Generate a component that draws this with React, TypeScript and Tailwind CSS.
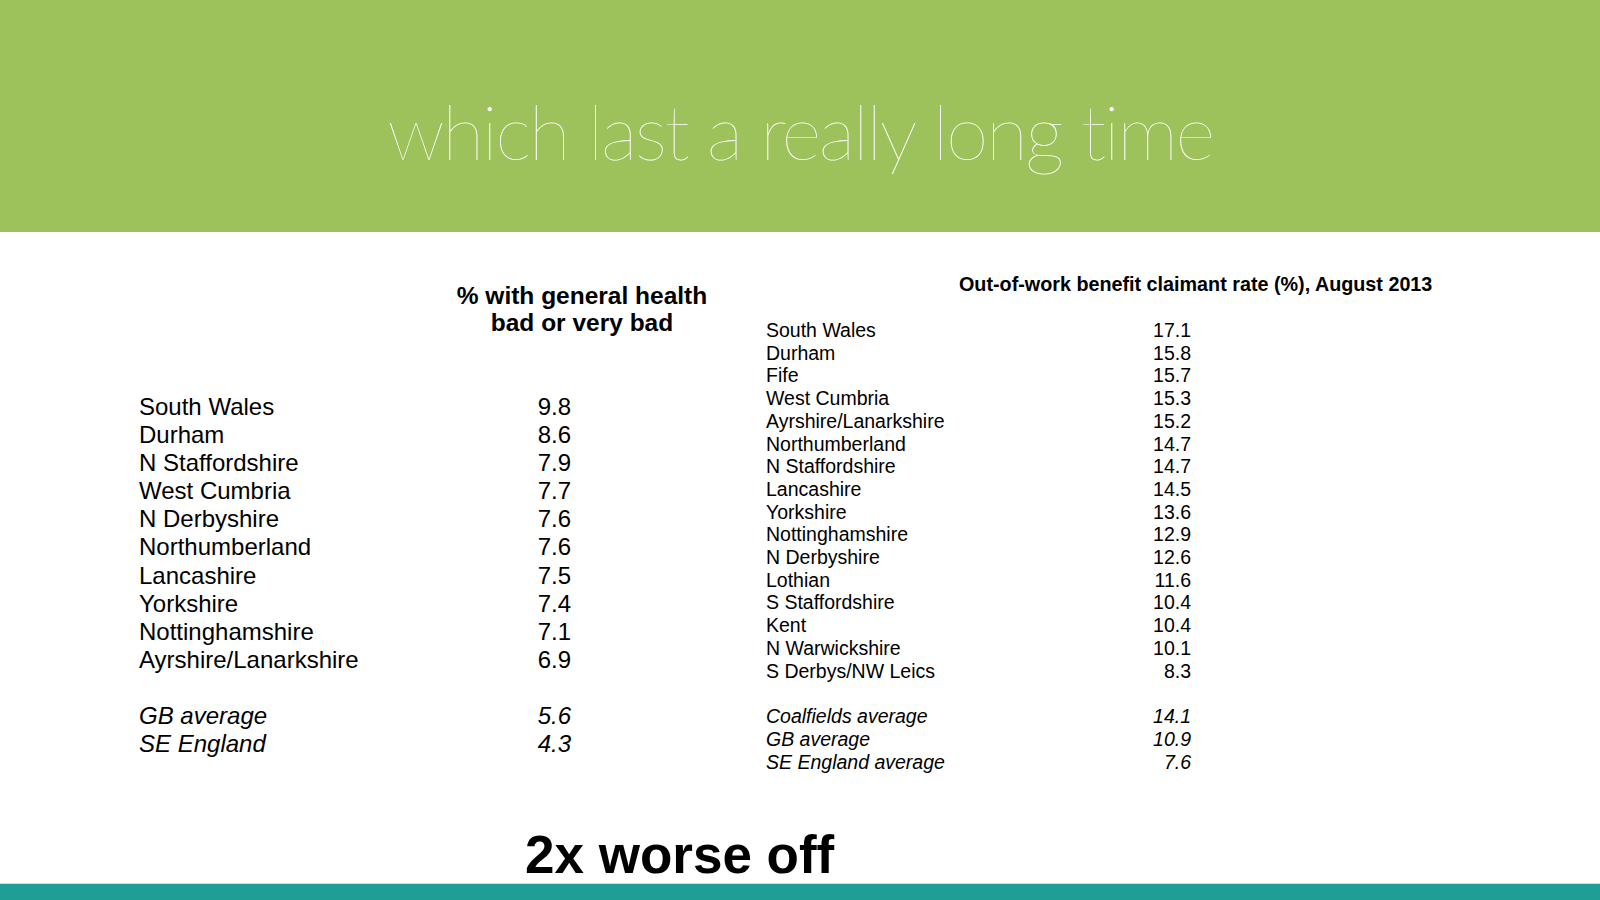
import React from 'react';

const health: [string, string][] = [
  ['South Wales', '9.8'],
  ['Durham', '8.6'],
  ['N Staffordshire', '7.9'],
  ['West Cumbria', '7.7'],
  ['N Derbyshire', '7.6'],
  ['Northumberland', '7.6'],
  ['Lancashire', '7.5'],
  ['Yorkshire', '7.4'],
  ['Nottinghamshire', '7.1'],
  ['Ayrshire/Lanarkshire', '6.9'],
];

const healthAvg: [string, string][] = [
  ['GB average', '5.6'],
  ['SE England', '4.3'],
];

const claimants: [string, string][] = [
  ['South Wales', '17.1'],
  ['Durham', '15.8'],
  ['Fife', '15.7'],
  ['West Cumbria', '15.3'],
  ['Ayrshire/Lanarkshire', '15.2'],
  ['Northumberland', '14.7'],
  ['N Staffordshire', '14.7'],
  ['Lancashire', '14.5'],
  ['Yorkshire', '13.6'],
  ['Nottinghamshire', '12.9'],
  ['N Derbyshire', '12.6'],
  ['Lothian', '11.6'],
  ['S Staffordshire', '10.4'],
  ['Kent', '10.4'],
  ['N Warwickshire', '10.1'],
  ['S Derbys/NW Leics', '8.3'],
];

const claimantAvg: [string, string][] = [
  ['Coalfields average', '14.1'],
  ['GB average', '10.9'],
  ['SE England average', '7.6'],
];

const App: React.FC = () => {
  return (
    <div className="w-[1600px] h-[900px] bg-white flex flex-col overflow-hidden font-['Liberation_Sans',Arial,sans-serif] text-black">
      {/* Green title band */}
      <header className="h-[232px] shrink-0 bg-[#9dc15b] flex items-start justify-center pt-[80px]">
        <h1 className="text-white text-[77px] leading-[100px] font-thin tracking-[-2.5px] font-['Lato',sans-serif]">
          which last a really long time
        </h1>
      </header>

      <main className="flex-1 flex">
        {/* Left table */}
        <section className="w-[432px] ml-[139px] pt-[50px]">
          <div className="w-[300px] ml-[293px] text-[24.5px] leading-[27px] font-bold text-center">
            % with general health<br />bad or very bad
          </div>
          <div className="mt-[57px] text-[24px] leading-[28.1px]">
            {health.map(([name, v]) => (
              <div key={name} className="flex justify-between">
                <span>{name}</span>
                <span>{v}</span>
              </div>
            ))}
          </div>
          <div className="mt-[28px] text-[24px] leading-[28.5px] italic">
            {healthAvg.map(([name, v]) => (
              <div key={name} className="flex justify-between">
                <span>{name}</span>
                <span>{v}</span>
              </div>
            ))}
          </div>
        </section>

        {/* Right table */}
        <section className="ml-[195px] pt-[41px] w-[680px]">
          <div className="pl-[193px] text-[19.75px] leading-[22px] font-bold">
            Out-of-work benefit claimant rate (%), August 2013
          </div>
          <div className="mt-[24px] w-[425px] text-[19.5px] leading-[22.7px]">
            {claimants.map(([name, v], i) => (
              <div key={name + i} className="flex justify-between">
                <span>{name}</span>
                <span>{v}</span>
              </div>
            ))}
          </div>
          <div className="mt-[23px] w-[425px] text-[19.5px] leading-[22.7px] italic">
            {claimantAvg.map(([name, v]) => (
              <div key={name} className="flex justify-between">
                <span>{name}</span>
                <span>{v}</span>
              </div>
            ))}
          </div>
        </section>
      </main>

      <div className="h-[58px] shrink-0 flex items-end pl-[525px]">
        <span className="text-[53px] leading-[56px] font-bold">2x worse off</span>
      </div>
      <footer className="h-[17px] shrink-0 bg-[#1f9e96] border-t border-[#d8d8d8]" />
    </div>
  );
};

export default App;
